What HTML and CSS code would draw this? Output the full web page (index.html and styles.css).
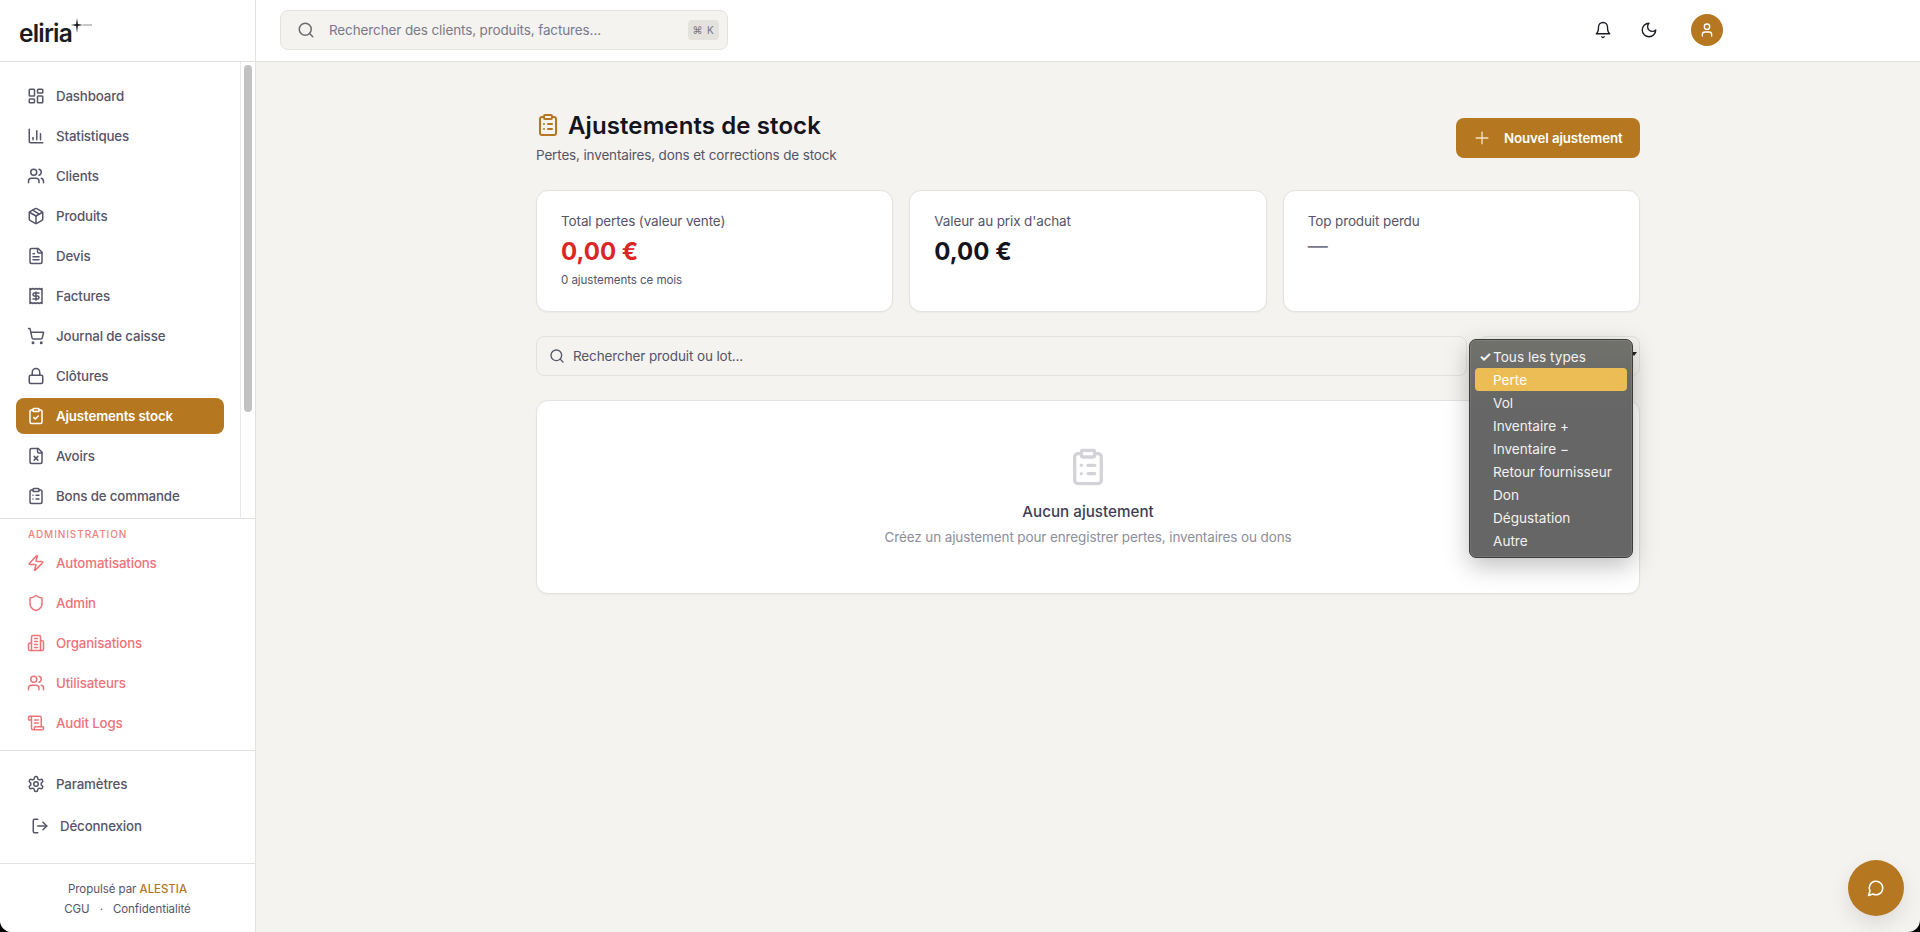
FILE: index.html
```html
<!DOCTYPE html>
<html lang="fr">
<head>
  <meta charset="UTF-8">
  <title>Ajustements de stock</title>
  <link rel="stylesheet" href="styles.css">
</head>
<body>
  <!-- Icons -->
  <svg class="sprite" xmlns="http://www.w3.org/2000/svg">
    <symbol id="i-dashboard" viewBox="0 0 24 24"><rect x="3" y="3" width="7" height="9" rx="1"/><rect x="14" y="3" width="7" height="5" rx="1"/><rect x="14" y="12" width="7" height="9" rx="1"/><rect x="3" y="16" width="7" height="5" rx="1"/></symbol>
    <symbol id="i-chart" viewBox="0 0 24 24"><path d="M3 3v16a2 2 0 0 0 2 2h16"/><path d="M18 17V9"/><path d="M13 17V5"/><path d="M8 17v-3"/></symbol>
    <symbol id="i-users" viewBox="0 0 24 24"><path d="M16 21v-2a4 4 0 0 0-4-4H6a4 4 0 0 0-4 4v2"/><circle cx="9" cy="7" r="4"/><path d="M22 21v-2a4 4 0 0 0-3-3.87"/><path d="M16 3.13a4 4 0 0 1 0 7.75"/></symbol>
    <symbol id="i-package" viewBox="0 0 24 24"><path d="M11 21.73a2 2 0 0 0 2 0l7-4A2 2 0 0 0 21 16V8a2 2 0 0 0-1-1.73l-7-4a2 2 0 0 0-2 0l-7 4A2 2 0 0 0 3 8v8a2 2 0 0 0 1 1.73z"/><path d="M12 22V12"/><path d="M3.29 7 12 12l8.71-5"/><path d="m7.5 4.27 9 5.15"/></symbol>
    <symbol id="i-file" viewBox="0 0 24 24"><path d="M15 2H6a2 2 0 0 0-2 2v16a2 2 0 0 0 2 2h12a2 2 0 0 0 2-2V7Z"/><path d="M14 2v4a2 2 0 0 0 2 2h4"/><path d="M10 9H8"/><path d="M16 13H8"/><path d="M16 17H8"/></symbol>
    <symbol id="i-receipt" viewBox="0 0 24 24"><path d="M4 2v20l2-1 2 1 2-1 2 1 2-1 2 1 2-1 2 1V2l-2 1-2-1-2 1-2-1-2 1-2-1-2 1Z"/><path d="M16 8h-6a2 2 0 1 0 0 4h4a2 2 0 1 1 0 4H8"/><path d="M12 17.5v-11"/></symbol>
    <symbol id="i-cart" viewBox="0 0 24 24"><circle cx="8" cy="21" r="1"/><circle cx="19" cy="21" r="1"/><path d="M2.05 2.05h2l2.66 12.42a2 2 0 0 0 2 1.58h9.78a2 2 0 0 0 1.95-1.57l1.65-7.43H5.12"/></symbol>
    <symbol id="i-lock" viewBox="0 0 24 24"><rect x="3" y="11" width="18" height="11" rx="2"/><path d="M7 11V7a5 5 0 0 1 10 0v4"/></symbol>
    <symbol id="i-clipcheck" viewBox="0 0 24 24"><rect x="8" y="2" width="8" height="4" rx="1"/><path d="M16 4h2a2 2 0 0 1 2 2v14a2 2 0 0 1-2 2H6a2 2 0 0 1-2-2V6a2 2 0 0 1 2-2h2"/><path d="m9 14 2 2 4-4"/></symbol>
    <symbol id="i-filex" viewBox="0 0 24 24"><path d="M15 2H6a2 2 0 0 0-2 2v16a2 2 0 0 0 2 2h12a2 2 0 0 0 2-2V7Z"/><path d="M14 2v4a2 2 0 0 0 2 2h4"/><path d="m14.5 12.5-5 5"/><path d="m9.5 12.5 5 5"/></symbol>
    <symbol id="i-cliplist" viewBox="0 0 24 24"><rect x="8" y="2" width="8" height="4" rx="1"/><path d="M16 4h2a2 2 0 0 1 2 2v14a2 2 0 0 1-2 2H6a2 2 0 0 1-2-2V6a2 2 0 0 1 2-2h2"/><path d="M12 11h4"/><path d="M12 16h4"/><path d="M8 11h.01"/><path d="M8 16h.01"/></symbol>
    <symbol id="i-zap" viewBox="0 0 24 24"><path d="M4 14a1 1 0 0 1-.78-1.63l9.9-10.2a.5.5 0 0 1 .86.46l-1.92 6.02A1 1 0 0 0 13 10h7a1 1 0 0 1 .78 1.63l-9.9 10.2a.5.5 0 0 1-.86-.46l1.92-6.02A1 1 0 0 0 11 14z"/></symbol>
    <symbol id="i-shield" viewBox="0 0 24 24"><path d="M20 13c0 5-3.5 7.5-7.66 8.95a1 1 0 0 1-.67-.01C7.5 20.5 4 18 4 13V6a1 1 0 0 1 1-1c2 0 4.5-1.2 6.24-2.72a1.17 1.17 0 0 1 1.52 0C14.51 3.81 17 5 19 5a1 1 0 0 1 1 1z"/></symbol>
    <symbol id="i-building" viewBox="0 0 24 24"><path d="M6 22V4a2 2 0 0 1 2-2h8a2 2 0 0 1 2 2v18Z"/><path d="M6 12H4a2 2 0 0 0-2 2v6a2 2 0 0 0 2 2h2"/><path d="M18 9h2a2 2 0 0 1 2 2v9a2 2 0 0 1-2 2h-2"/><path d="M10 6h4"/><path d="M10 10h4"/><path d="M10 14h4"/><path d="M10 18h4"/></symbol>
    <symbol id="i-scroll" viewBox="0 0 24 24"><path d="M15 12h-5"/><path d="M15 8h-5"/><path d="M19 17V5a2 2 0 0 0-2-2H4"/><path d="M8 21h12a2 2 0 0 0 2-2v-1a1 1 0 0 0-1-1H11a1 1 0 0 0-1 1v1a2 2 0 1 1-4 0V5a2 2 0 1 0-4 0v2a1 1 0 0 0 1 1h3"/></symbol>
    <symbol id="i-settings" viewBox="0 0 24 24"><path d="M12.22 2h-.44a2 2 0 0 0-2 2v.18a2 2 0 0 1-1 1.73l-.43.25a2 2 0 0 1-2 0l-.15-.08a2 2 0 0 0-2.73.73l-.22.38a2 2 0 0 0 .73 2.73l.15.1a2 2 0 0 1 1 1.72v.51a2 2 0 0 1-1 1.74l-.15.09a2 2 0 0 0-.73 2.73l.22.38a2 2 0 0 0 2.73.73l.15-.08a2 2 0 0 1 2 0l.43.25a2 2 0 0 1 1 1.73V20a2 2 0 0 0 2 2h.44a2 2 0 0 0 2-2v-.18a2 2 0 0 1 1-1.73l.43-.25a2 2 0 0 1 2 0l.15.08a2 2 0 0 0 2.73-.73l.22-.39a2 2 0 0 0-.73-2.73l-.15-.08a2 2 0 0 1-1-1.74v-.5a2 2 0 0 1 1-1.74l.15-.09a2 2 0 0 0 .73-2.73l-.22-.38a2 2 0 0 0-2.73-.73l-.15.08a2 2 0 0 1-2 0l-.43-.25a2 2 0 0 1-1-1.73V4a2 2 0 0 0-2-2z"/><circle cx="12" cy="12" r="3"/></symbol>
    <symbol id="i-logout" viewBox="0 0 24 24"><path d="M9 21H5a2 2 0 0 1-2-2V5a2 2 0 0 1 2-2h4"/><path d="m16 17 5-5-5-5"/><path d="M21 12H9"/></symbol>
    <symbol id="i-search" viewBox="0 0 24 24"><circle cx="11" cy="11" r="8"/><path d="m21 21-4.3-4.3"/></symbol>
    <symbol id="i-bell" viewBox="0 0 24 24"><path d="M6 8a6 6 0 0 1 12 0c0 7 3 9 3 9H3s3-2 3-9"/><path d="M10.3 21a1.94 1.94 0 0 0 3.4 0"/></symbol>
    <symbol id="i-moon" viewBox="0 0 24 24"><path d="M12 3a6 6 0 0 0 9 9 9 9 0 1 1-9-9Z"/></symbol>
    <symbol id="i-user" viewBox="0 0 24 24"><path d="M19 21v-2a4 4 0 0 0-4-4H9a4 4 0 0 0-4 4v2"/><circle cx="12" cy="7" r="4"/></symbol>
    <symbol id="i-plus" viewBox="0 0 24 24"><path d="M5 12h14"/><path d="M12 5v14"/></symbol>
    <symbol id="i-chat" viewBox="0 0 24 24"><path d="M7.9 20A9 9 0 1 0 4 16.1L2 22Z"/></symbol>
  </svg>

  <div class="app">
    <!-- Sidebar -->
    <aside class="sidebar">
      <div class="logo">
        <span class="logo-text">eliria</span>
        <svg class="logo-star" viewBox="0 0 24 16" xmlns="http://www.w3.org/2000/svg">
          <path d="M7 0 7.9 6.1 13 7 7.9 7.9 7 15 6.1 7.9 1 7 6.1 6.1Z"/>
          <path d="M13 7h9" class="logo-line"/>
        </svg>
      </div>

      <div class="nav-wrap">
        <nav class="nav-main">
          <a class="nav-item"><svg class="icon"><use href="#i-dashboard"/></svg>Dashboard</a>
          <a class="nav-item"><svg class="icon"><use href="#i-chart"/></svg>Statistiques</a>
          <a class="nav-item"><svg class="icon"><use href="#i-users"/></svg>Clients</a>
          <a class="nav-item"><svg class="icon"><use href="#i-package"/></svg>Produits</a>
          <a class="nav-item"><svg class="icon"><use href="#i-file"/></svg>Devis</a>
          <a class="nav-item"><svg class="icon"><use href="#i-receipt"/></svg>Factures</a>
          <a class="nav-item"><svg class="icon"><use href="#i-cart"/></svg>Journal de caisse</a>
          <a class="nav-item"><svg class="icon"><use href="#i-lock"/></svg>Clôtures</a>
          <a class="nav-item active"><svg class="icon"><use href="#i-clipcheck"/></svg>Ajustements stock</a>
          <a class="nav-item"><svg class="icon"><use href="#i-filex"/></svg>Avoirs</a>
          <a class="nav-item"><svg class="icon"><use href="#i-cliplist"/></svg>Bons de commande</a>
        </nav>
        <div class="rail"><div class="rail-thumb"></div></div>
      </div>

      <div class="nav-admin">
        <div class="nav-label">Administration</div>
        <a class="nav-item"><svg class="icon"><use href="#i-zap"/></svg>Automatisations</a>
        <a class="nav-item"><svg class="icon"><use href="#i-shield"/></svg>Admin</a>
        <a class="nav-item"><svg class="icon"><use href="#i-building"/></svg>Organisations</a>
        <a class="nav-item"><svg class="icon"><use href="#i-users"/></svg>Utilisateurs</a>
        <a class="nav-item"><svg class="icon"><use href="#i-scroll"/></svg>Audit Logs</a>
      </div>

      <div class="nav-bottom">
        <a class="nav-item"><svg class="icon"><use href="#i-settings"/></svg>Paramètres</a>
        <a class="nav-item logout"><svg class="icon"><use href="#i-logout"/></svg>Déconnexion</a>
      </div>

      <div class="side-footer">
        <p>Propulsé par <span class="brand">ALESTIA</span></p>
        <p class="side-links"><span>CGU</span><span>·</span><span>Confidentialité</span></p>
      </div>
    </aside>

    <div class="main-col">
      <!-- Header -->
      <header class="topbar">
        <div class="global-search">
          <svg class="icon search-icon"><use href="#i-search"/></svg>
          <span class="global-placeholder">Rechercher des clients, produits, factures...</span>
          <span class="kbd">⌘ K</span>
        </div>
        <div class="top-actions">
          <svg class="icon top-icon"><use href="#i-bell"/></svg>
          <svg class="icon top-icon"><use href="#i-moon"/></svg>
          <div class="avatar"><svg class="icon"><use href="#i-user"/></svg></div>
        </div>
      </header>

      <!-- Page -->
      <main class="page">
        <div class="content">
          <div class="page-head">
            <div>
              <h1><svg class="icon title-icon"><use href="#i-cliplist"/></svg>Ajustements de stock</h1>
              <p class="subtitle">Pertes, inventaires, dons et corrections de stock</p>
            </div>
            <button class="primary-btn"><svg class="icon"><use href="#i-plus"/></svg>Nouvel ajustement</button>
          </div>

          <div class="stats">
            <div class="card stat">
              <div class="stat-label">Total pertes (valeur vente)</div>
              <div class="stat-value red">0,00 €</div>
              <div class="stat-note">0 ajustements ce mois</div>
            </div>
            <div class="card stat">
              <div class="stat-label">Valeur au prix d'achat</div>
              <div class="stat-value">0,00 €</div>
            </div>
            <div class="card stat">
              <div class="stat-label">Top produit perdu</div>
              <div class="stat-dash">—</div>
            </div>
          </div>

          <div class="filters">
            <div class="filter-search">
              <svg class="icon"><use href="#i-search"/></svg>
              <span>Rechercher produit ou lot...</span>
            </div>
            <div class="filter-select">
              <span class="caret"></span>
              <ul class="dropdown">
                <li class="checked">Tous les types</li>
                <li class="hover">Perte</li>
                <li>Vol</li>
                <li>Inventaire +</li>
                <li>Inventaire −</li>
                <li>Retour fournisseur</li>
                <li>Don</li>
                <li>Dégustation</li>
                <li>Autre</li>
              </ul>
            </div>
          </div>

          <div class="card empty">
            <svg class="icon empty-icon"><use href="#i-cliplist"/></svg>
            <div class="empty-title">Aucun ajustement</div>
            <div class="empty-text">Créez un ajustement pour enregistrer pertes, inventaires ou dons</div>
          </div>
        </div>
      </main>
    </div>
  </div>

  <button class="chat-btn"><svg class="icon"><use href="#i-chat"/></svg></button>
</body>
</html>
```

FILE: styles.css
```css
* {
  box-sizing: border-box;
}

html, body {
  height: 100%;
}

body {
  margin: 0;
  background-color: #000;
  font-family: "Inter", "Noto Sans", sans-serif;
  color: #55556a;
  overflow: hidden;
}

.sprite {
  display: none;
}

.icon {
  width: 18px;
  height: 18px;
  flex-shrink: 0;
  fill: none;
  stroke: currentColor;
  stroke-width: 2;
  stroke-linecap: round;
  stroke-linejoin: round;
}

.app {
  display: flex;
  height: 932px;
  border-radius: 0 0 12px 12px;
  overflow: hidden;
  background-color: #f4f3f0;
}

/* Sidebar */
.sidebar {
  width: 256px;
  flex-shrink: 0;
  display: flex;
  flex-direction: column;
  background-color: #fff;
  border-right: 1px solid #e3e2df;
}

.logo {
  height: 62px;
  flex-shrink: 0;
  display: flex;
  align-items: flex-start;
  padding: 18px 0 0 19px;
  border-bottom: 1px solid #e3e2df;
}

.logo-text {
  font-size: 24.5px;
  font-weight: 600;
  line-height: 30px;
  letter-spacing: -0.8px;
  color: #1b1b22;
}

.logo-star {
  width: 24px;
  height: 16px;
  margin-left: -2px;
  fill: #1b1b22;
}

.logo-line {
  stroke: #1b1b22;
  stroke-width: 0.5;
  fill: none;
}

.nav-wrap {
  display: flex;
  height: 456px;
  flex-shrink: 0;
}

.nav-main {
  flex: 1;
  min-width: 0;
  overflow: hidden;
  padding: 16px 16px 0;
}

.rail {
  width: 15px;
  flex-shrink: 0;
  padding: 3px 3px 0 3px;
  border-left: 1px solid #e9e9e7;
}

.rail-thumb {
  width: 8px;
  height: 347px;
  border-radius: 4px;
  background-color: #c2c2c2;
}

.nav-item {
  display: flex;
  align-items: center;
  gap: 11px;
  height: 36px;
  margin-bottom: 4px;
  padding-left: 11px;
  border-radius: 8px;
  font-size: 13.3px;
  font-weight: 500;
  letter-spacing: -0.15px;
  color: #55556a;
}

.nav-item.active {
  background-color: #b57821;
  color: #fff;
  font-weight: 600;
}

.nav-admin {
  flex-shrink: 0;
  padding: 0 16px 0;
  border-top: 1px solid #e3e2df;
  height: 232px;
}

.nav-admin .nav-item {
  color: #ec7378;
}

.nav-label {
  padding: 9px 12px 0;
  height: 26px;
  font-size: 10px;
  font-weight: 500;
  letter-spacing: 0.9px;
  text-transform: uppercase;
  color: #f07f84;
}

.nav-bottom {
  flex-shrink: 0;
  height: 113px;
  padding: 15px 16px 0;
  border-top: 1px solid #e3e2df;
}

.nav-bottom .logout {
  margin-top: 6px;
  padding-left: 15px;
}

.side-footer {
  flex: 1;
  padding-top: 15px;
  border-top: 1px solid #e3e2df;
  text-align: center;
  font-size: 11.5px;
  letter-spacing: -0.05px;
  line-height: 20px;
}

.side-footer p {
  margin: 0;
}

.side-links {
  display: flex;
  justify-content: center;
  gap: 10px;
}

.brand {
  color: #b57821;
  font-weight: 500;
}

/* Header */
.main-col {
  flex: 1;
  min-width: 0;
  display: flex;
  flex-direction: column;
}

.topbar {
  height: 62px;
  flex-shrink: 0;
  display: flex;
  align-items: center;
  justify-content: space-between;
  padding: 0 197px 1px 24px;
  background-color: #fff;
  border-bottom: 1px solid #e3e2df;
}

.global-search {
  width: 448px;
  height: 40px;
  display: flex;
  align-items: center;
  padding: 0 8px 0 16px;
  background-color: #f4f3f0;
  border: 1px solid #e3e2df;
  border-radius: 8px;
  color: #7a7a89;
  font-size: 13.5px;
  letter-spacing: -0.12px;
}

.search-icon {
  margin-right: 14px;
  color: #6c6c70;
}

.global-placeholder {
  flex: 1;
}

.kbd {
  display: flex;
  align-items: center;
  justify-content: center;
  width: 31px;
  height: 20px;
  background-color: #e3e2dd;
  border-radius: 4px;
  font-size: 10px;
  letter-spacing: 0.8px;
  color: #77777f;
}

.top-actions {
  display: flex;
  align-items: center;
  gap: 28px;
}

.top-icon {
  width: 18px;
  height: 18px;
  stroke-width: 1.8;
  color: #1b1b22;
}

.avatar {
  width: 32px;
  height: 32px;
  margin-left: 5px;
  display: flex;
  align-items: center;
  justify-content: center;
  border-radius: 50%;
  background-color: #b57821;
  color: #fff;
}

.avatar .icon {
  width: 16px;
  height: 16px;
}

/* Page */
.page {
  flex: 1;
  padding-top: 47px;
}

.content {
  width: 1104px;
  margin: 0 auto;
}

.page-head {
  display: flex;
  justify-content: space-between;
  align-items: flex-start;
  margin-bottom: 25px;
}

h1 {
  display: flex;
  align-items: center;
  gap: 8px;
  margin: 0;
  height: 32px;
  font-size: 24px;
  font-weight: 600;
  letter-spacing: 0.1px;
  color: #14141c;
}

.title-icon {
  width: 24px;
  height: 24px;
  color: #b57821;
}

.subtitle {
  margin: 4px 0 0;
  font-size: 13.5px;
  letter-spacing: -0.15px;
  line-height: 20px;
}

.primary-btn {
  width: 184px;
  height: 40px;
  margin-top: 9px;
  display: flex;
  align-items: center;
  gap: 12px;
  padding: 0 0 0 16px;
  border: none;
  border-radius: 8px;
  background-color: #b57821;
  color: #fff;
  font-family: inherit;
  font-size: 13.3px;
  font-weight: 600;
  letter-spacing: -0.1px;
}

.primary-btn .icon {
  width: 20px;
  height: 20px;
  stroke-width: 1.6;
  color: #f2e3cc;
}

.stats {
  display: grid;
  grid-template-columns: repeat(3, 1fr);
  gap: 16px;
  margin-bottom: 24px;
}

.card {
  background-color: #fff;
  border: 1px solid #e3e2df;
  border-radius: 12px;
  box-shadow: 0 1px 2px rgba(0, 0, 0, 0.04);
}

.stat {
  height: 122px;
  padding: 20px 24px 0;
}

.stat-label {
  font-size: 13.5px;
  letter-spacing: -0.12px;
  line-height: 20px;
}

.stat-value {
  margin-top: 5px;
  font-size: 24px;
  font-weight: 700;
  line-height: 32px;
  color: #14141c;
}

.stat-value.red {
  color: #dc2626;
}

.stat-note {
  margin-top: 4px;
  font-size: 11.6px;
  letter-spacing: -0.08px;
  line-height: 16px;
}

.stat-dash {
  margin-top: 1px;
  font-size: 20px;
  line-height: 28px;
  color: #77778a;
}

.filters {
  display: flex;
  gap: 12px;
  margin-bottom: 24px;
}

.filter-search {
  flex: 1;
  height: 40px;
  display: flex;
  align-items: center;
  gap: 8px;
  padding-left: 12px;
  background-color: #f4f3f0;
  border: 1px solid #e3e2df;
  border-radius: 8px;
  font-size: 13.5px;
  letter-spacing: -0.12px;
}

.filter-search .icon {
  width: 16px;
  height: 16px;
}

.filter-select {
  position: relative;
  width: 161px;
  height: 40px;
  background-color: #f4f3f0;
  border: 1px solid #e3e2df;
  border-radius: 8px;
}

.caret {
  position: absolute;
  top: 15px;
  right: 2px;
  border-left: 3px solid transparent;
  border-right: 3px solid transparent;
  border-top: 4px solid #222;
}

.dropdown {
  position: absolute;
  top: 2px;
  left: -11px;
  width: 164px;
  height: 219px;
  margin: 0;
  padding: 5px 5px;
  list-style: none;
  border: 1px solid #3c3c3a;
  border-radius: 7px;
  background-image: linear-gradient(#71716c, #666666 30%);
  box-shadow: 0 8px 24px rgba(0, 0, 0, 0.25), inset 0 0 0 1px rgba(255, 255, 255, 0.1);
  color: #f2f2f0;
  font-size: 13.6px;
  z-index: 5;
}

.dropdown li {
  height: 23px;
  line-height: 24px;
  padding-left: 18px;
  border-radius: 4px;
  white-space: nowrap;
}

.dropdown .hover {
  background-color: #ecbd55;
  color: #fff;
}

.dropdown .checked {
  position: relative;
}

.dropdown .checked::before {
  content: "✓";
  position: absolute;
  left: 4px;
  font-size: 14px;
  font-weight: 700;
}

.empty {
  height: 194px;
  padding-top: 46px;
  display: flex;
  flex-direction: column;
  align-items: center;
}

.empty-icon {
  width: 40px;
  height: 40px;
  stroke-width: 2;
  color: #d2d2d8;
}

.empty-title {
  margin-top: 13px;
  font-size: 15.2px;
  font-weight: 500;
  line-height: 24px;
  color: #3e3e50;
}

.empty-text {
  margin-top: 3px;
  font-size: 13.5px;
  letter-spacing: -0.12px;
  line-height: 20px;
  color: #8e8e9c;
}

.chat-btn {
  position: fixed;
  right: 16px;
  bottom: 16px;
  width: 56px;
  height: 56px;
  display: flex;
  align-items: center;
  justify-content: center;
  border: none;
  border-radius: 50%;
  background-color: #b57821;
  color: #fff;
  box-shadow: 0 8px 20px rgba(0, 0, 0, 0.1);
}
```
